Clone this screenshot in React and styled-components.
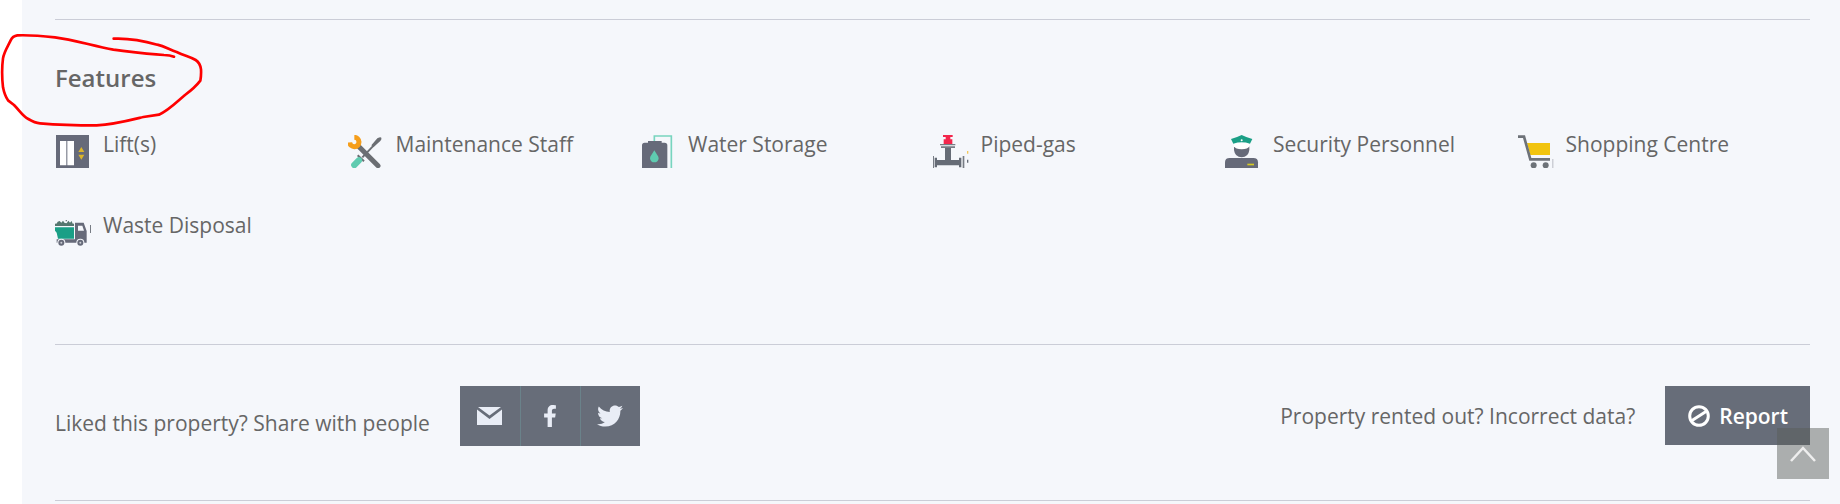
import React from 'react';
import styled, { createGlobalStyle } from 'styled-components';
import { FaFacebookF, FaTwitter } from 'react-icons/fa';

const SLATE = '#676d79';
const GREEN = '#1a9f86';
const TEAL = '#5fcbb0';
const YELLOW = '#f1c40f';

const GlobalStyle = createGlobalStyle`
	* {
		box-sizing: border-box;
	}
	body {
		margin: 0;
		background: #fff;
		color: #666;
		font-family: 'Open Sans', sans-serif;
		font-size: 21px;
		line-height: 30px;
	}
`;
const Page = styled.div`
	position: relative;
	padding-left: 22px;
`;
const Panel = styled.main`
	min-height: 100vh;
	padding: 19px 30px 0 33px;
	background: #f5f7fb;
`;
const Section = styled.section`
	padding: 42px 0 95px;
	border-top: 1px solid #cbcdd7;
`;
const Title = styled.h2`
	margin: 0 0 35px;
	font-size: 24px;
	font-weight: 600;
	line-height: 32px;
`;
const FeatureList = styled.ul`
	display: grid;
	grid-template-columns: repeat(6, 1fr);
	row-gap: 42px;
	margin: 0;
	padding: 0;
	list-style: none;
`;
const Feature = styled.li`
	display: flex;
	align-items: flex-start;
	gap: 12px;
`;
const FeatureIcon = styled.svg`
	flex: none;
	width: 36px;
	height: 33px;
	margin-top: 6px;
`;
const Footer = styled.footer`
	display: flex;
	justify-content: space-between;
	align-items: flex-start;
	padding: 41px 0 54px;
	border-top: 1px solid #cbcdd7;
	border-bottom: 1px solid #cbcdd7;
`;
const FooterGroup = styled.div`
	display: flex;
	align-items: center;
	gap: 30px;
`;
const ShareText = styled.span`
	padding-top: 14px;
`;
const ShareButtons = styled.div`
	display: flex;
`;
const ShareButton = styled.a`
	display: flex;
	justify-content: center;
	align-items: center;
	width: 60px;
	height: 60px;
	background: ${SLATE};
	color: #e9edf6;
	& + & {
		border-left: 1px solid #6a828a;
	}
`;
const ReportButton = styled.button`
	display: flex;
	align-items: center;
	gap: 9px;
	height: 59px;
	padding: 0 22px 0 23px;
	border: 0;
	background: ${SLATE};
	color: #fff;
	font: inherit;
	font-weight: 600;
`;
const ToTop = styled.button`
	position: fixed;
	right: 11px;
	bottom: 25px;
	display: flex;
	justify-content: center;
	align-items: center;
	width: 52px;
	height: 51px;
	padding: 0;
	border: 0;
	background: rgba(89, 93, 89, 0.475);
`;
const Marker = styled.svg`
	position: absolute;
	top: 0;
	left: 0;
	width: 210px;
	height: 130px;
	pointer-events: none;
`;

const LiftIcon = () => (
	<>
		<path fill="#666a79" d="M3 0H102V99H3z" />
		<path fill="#fff" d="M15 18H34V91H15zM37 18H57V91H37z" />
		<path fill="#dcb52a" d="M79 36L88 51H70zM79 74L88 59H70z" />
	</>
);
const ToolsIcon = () => (
	<>
		<path fill="none" stroke="#6b6e73" strokeWidth="6" d="M88 20L43 67" />
		<path fill="#6b6e73" d="M70 31L88 10Q98 4 100 8Q102 12 97 18L76 37z" />
		<path fill="none" stroke="#6b6e73" strokeWidth="6" d="M29 61L48 79" />
		<path fill="none" stroke={TEAL} strokeWidth="19" strokeLinecap="round" d="M33 76L19 90" />
		<path fill="none" stroke="#6b6e73" strokeWidth="15" strokeLinecap="round" d="M33 35L90 92" />
		<path fill="none" stroke="#f59e1b" strokeWidth="15" d="M19 7A14 14 0 1 1 5 22" />
	</>
);
const TankIcon = () => (
	<>
		<path fill="none" stroke="#78d5bf" strokeWidth="5" d="M43 22V3H94V99" />
		<path fill="#666a79" d="M24 18H65V23H74Q82 23 82 31V99H6V31Q6 23 14 23H24z" />
		<path fill={TEAL} d="M43 46C48 56 56 63 56 70A13 12 0 0 1 30 70C30 63 38 56 43 46z" />
	</>
);
const ValveIcon = () => (
	<>
		<path fill="#f3264c" d="M30 0H59V6H52V13H58V30H32V13H38V6H30z" />
		<path fill="#777c84" d="M21 27H67V31H21zM24 34H66V39H24zM0 63H3V100H0zM89 63H94V100H89z" />
		<path fill="#666c76" d="M36 39H54V75H78V68H85V97H78V91H12V97H5V68H12V75H36z" />
		<path fill="#f4c95b" d="M102 48H106V56H102z" />
		<path fill="#666c76" d="M102 74H106V83H102z" />
	</>
);
const GuardIcon = () => (
	<>
		<path fill="#666a79" d="M27 34H73V45Q70 67 50 67Q30 67 27 45z" />
		<path fill="#fff" d="M27 25H73V34Q69 43 50 43Q31 43 27 34z" />
		<path fill={GREEN} d="M18 12Q36 7 50 0Q64 7 82 12L75 26Q50 18 25 26z" />
		<circle cx="50" cy="16" r="3" fill="#fff" />
		<path fill="#666a79" d="M0 99V82Q0 69 14 69H85Q99 69 99 82V99z" />
		<path fill="#d6cb22" d="M67 86H87V91H67z" />
	</>
);
const CartIcon = () => (
	<>
		<path fill={YELLOW} d="M27 24H96V60H37z" />
		<path fill="none" stroke="#6d7278" strokeWidth="8" d="M0 5H18L37 73H96" />
		<circle cx="47" cy="91" r="9" fill="#6d7278" />
		<circle cx="83" cy="91" r="9" fill="#6d7278" />
		<path fill="#b9bcc3" d="M103 72H106V99H103z" />
	</>
);
const TruckIcon = () => (
	<>
		<path fill="#56766f" d="M3 26L8 17L14 15L19 20L24 14L29 21L35 22L40 14L45 20L50 15L54 26z" />
		<path fill="#777c84" d="M32 12H36V16H32z" />
		<path fill="#56766f" d="M0 23H57V30H0z" />
		<path fill={GREEN} d="M0 34H57V68H9L5 50L0 44z" />
		<path fill="#666a79" d="M5 70H60V20H86L95 45V80H5z" />
		<path fill="#f5f7fb" d="M69 29H82L87 44H69z" />
		<circle cx="19" cy="80" r="12" fill="#f5f7fb" />
		<circle cx="19" cy="80" r="9" fill="#666a79" />
		<circle cx="19" cy="80" r="3" fill="#c9ccd3" />
		<circle cx="76" cy="80" r="12" fill="#f5f7fb" />
		<circle cx="76" cy="80" r="9" fill="#666a79" />
		<circle cx="76" cy="80" r="3" fill="#c9ccd3" />
		<path fill="#777c84" d="M105 27H108V51H105z" />
	</>
);

const features = [
	{ name: 'Lift(s)', Icon: LiftIcon },
	{ name: 'Maintenance Staff', Icon: ToolsIcon },
	{ name: 'Water Storage', Icon: TankIcon },
	{ name: 'Piped-gas', Icon: ValveIcon },
	{ name: 'Security Personnel', Icon: GuardIcon },
	{ name: 'Shopping Centre', Icon: CartIcon },
	{ name: 'Waste Disposal', Icon: TruckIcon },
];

const App = () => (
	<Page>
		<GlobalStyle />
		<Panel>
			<Section>
				<Title>Features</Title>
				<FeatureList>
					{features.map(({ name, Icon }) => (
						<Feature key={name}>
							<FeatureIcon viewBox="0 0 108 99" aria-hidden="true">
								<Icon />
							</FeatureIcon>
							{name}
						</Feature>
					))}
				</FeatureList>
			</Section>
			<Footer>
				<FooterGroup>
					<ShareText>Liked this property? Share with people</ShareText>
					<ShareButtons>
						<ShareButton href="#mail" aria-label="Share by email">
							<svg width="25" height="18" viewBox="0 0 25 18" fill="currentColor">
								<path d="M1 0H24L12.500 8.500zM0 2.500L12.500 12L25 2.500V18H0z" />
							</svg>
						</ShareButton>
						<ShareButton href="#facebook" aria-label="Share on Facebook">
							<FaFacebookF size={22} />
						</ShareButton>
						<ShareButton href="#twitter" aria-label="Share on Twitter">
							<FaTwitter size={26} />
						</ShareButton>
					</ShareButtons>
				</FooterGroup>
				<FooterGroup>
					<span>Property rented out? Incorrect data?</span>
					<ReportButton type="button">
						<svg width="22" height="22" viewBox="0 0 22 22" fill="none" stroke="currentColor" strokeWidth="3">
							<circle cx="11" cy="11" r="9.300" />
							<path d="M4 15.500L18 6.500" />
						</svg>
						Report
					</ReportButton>
				</FooterGroup>
			</Footer>
		</Panel>
		<ToTop type="button" aria-label="Back to top">
			<svg width="28" height="16" viewBox="0 0 28 16" fill="none" stroke="#eee" strokeWidth="2.500">
				<path d="M2 15L14 2L26 15" />
			</svg>
		</ToTop>
		{/* Hand-drawn ring around the section title */}
		<Marker viewBox="0 0 630 390" fill="none" stroke="#f00" strokeWidth="8" strokeLinecap="round" strokeLinejoin="round">
			<path d="M522 170Q510 165 492 165C440 162 390 155 340 149C280 138 220 119 165 112C120 107 80 105 52 106Q38 108 32 121C23 140 12 156 9 175C5 205 6 235 9 262Q14 287 24 301L42 315C60 333 68 348 85 357Q105 369 120 370C170 374 230 376 290 376C340 374 385 362 430 351L477 344C505 332 530 306 555 285Q585 263 601 242Q604 225 603 208Q600 188 587 180C570 170 555 168 530 156C510 150 495 139 472 134C430 122 385 114 341 116" />
		</Marker>
	</Page>
);

export default App;
